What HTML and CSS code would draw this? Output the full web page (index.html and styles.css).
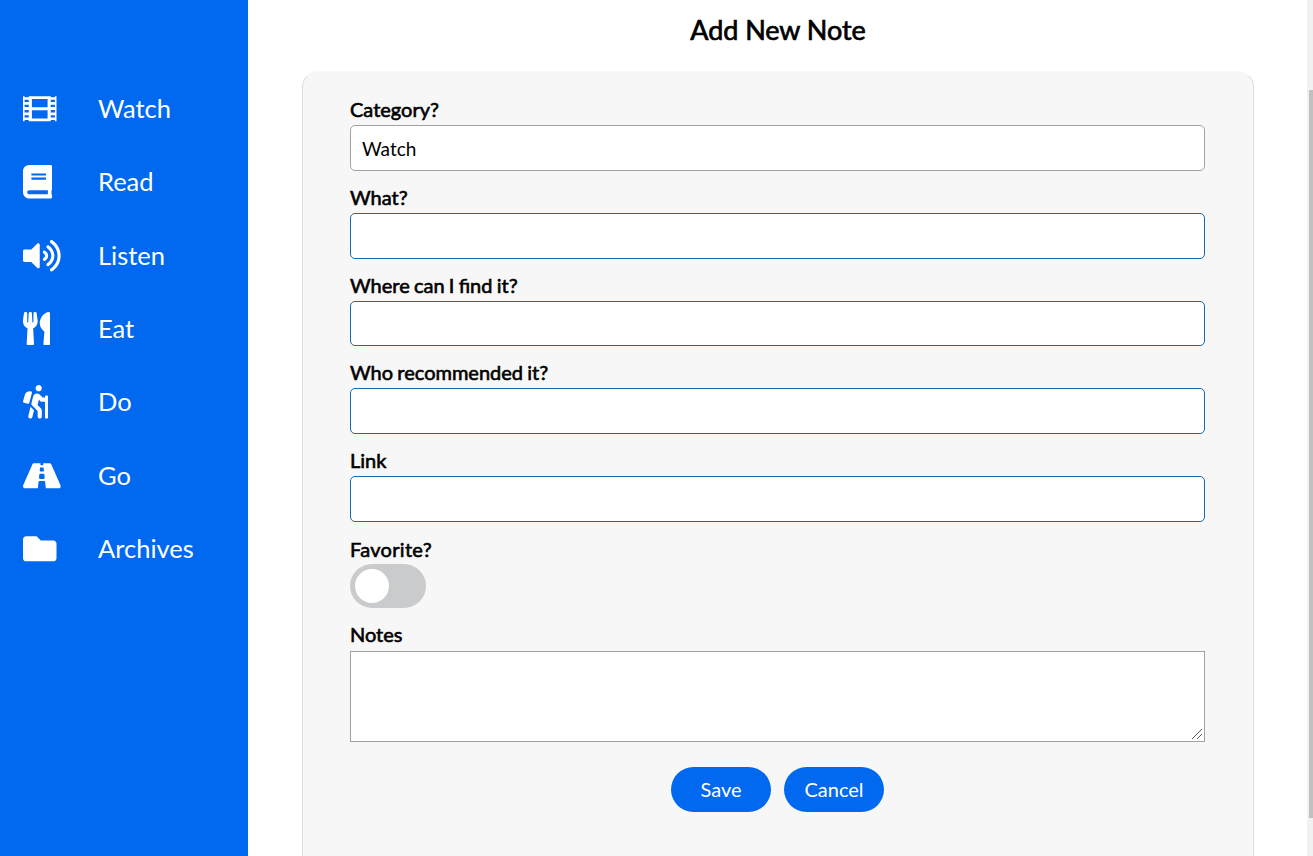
FILE: index.html
```html
<!DOCTYPE html>
<html lang="en">
<head>
<meta charset="utf-8">
<title>Add New Note</title>
<link rel="stylesheet" href="styles.css">
</head>
<body>
<nav class="sidebar">
  <a class="item"><svg class="icon" viewBox="0 0 512 512"><path fill-rule="evenodd" d="M0 64H24V80H88V64H424V80H488V64H512V448H488V428H424V448H88V428H24V448H0ZM136 108V232H376V108ZM136 280V404H376V280ZM24 118V152H88V118ZM24 194V230H88V194ZM24 274V312H88V274ZM24 354V388H88V354ZM424 118V152H488V118ZM424 194V230H488V194ZM424 274V312H488V274ZM424 354V388H488V354Z"/></svg><span>Watch</span></a>
  <a class="item"><svg class="icon" viewBox="0 0 448 512"><path d="M448 360V24c0-13.3-10.7-24-24-24H96C43 0 0 43 0 96v320c0 53 43 96 96 96h328c13.3 0 24-10.7 24-24v-16c0-7.5-3.5-14.3-8.9-18.7-4.2-15.4-4.2-59.3 0-74.7 5.4-4.3 8.9-11.1 8.9-18.6zM128 134c0-3.3 2.7-6 6-6h212c3.3 0 6 2.7 6 6v20c0 3.3-2.7 6-6 6H134c-3.3 0-6-2.7-6-6v-20zm0 64c0-3.3 2.7-6 6-6h212c3.3 0 6 2.7 6 6v20c0 3.3-2.7 6-6 6H134c-3.3 0-6-2.7-6-6v-20zm253.4 250H96c-17.7 0-32-14.3-32-32 0-17.6 14.4-32 32-32h285.4c-1.9 17.1-1.9 46.9 0 64z"/></svg><span>Read</span></a>
  <a class="item"><svg class="icon" viewBox="0 0 576 512"><path d="M215.03 71.05L126.06 160H24c-13.26 0-24 10.74-24 24v144c0 13.25 10.74 24 24 24h102.06l88.97 88.95c15.03 15.03 40.97 4.47 40.97-16.97V88.02c0-21.46-25.96-31.98-40.97-16.97zm233.32-51.08c-11.17-7.33-26.18-4.24-33.51 6.95-7.34 11.17-4.22 26.18 6.95 33.51 66.27 43.49 105.82 116.6 105.82 195.58 0 78.98-39.55 152.09-105.82 195.58-11.17 7.32-14.29 22.34-6.95 33.5 7.04 10.71 21.93 14.56 33.51 6.95C528.27 439.58 576 351.33 576 256S528.27 72.43 448.35 19.97zM480 256c0-63.53-32.06-121.94-85.77-156.24-11.19-7.14-26.03-3.82-33.12 7.46s-3.78 26.21 7.41 33.36C408.27 165.97 432 209.11 432 256s-23.73 90.03-63.48 115.42c-11.19 7.14-14.5 22.07-7.41 33.36 6.51 10.36 21.12 15.14 33.12 7.46C447.94 377.94 480 319.54 480 256zm-141.77-76.87c-11.58-6.33-26.19-2.16-32.61 9.45-6.39 11.61-2.16 26.2 9.45 32.61C327.98 228.28 336 241.63 336 256c0 14.38-8.02 27.72-20.92 34.81-11.61 6.41-15.84 21-9.45 32.61 6.43 11.66 21.05 15.8 32.61 9.45 28.23-15.55 45.77-45 45.77-76.88s-17.54-61.32-45.78-76.86z"/></svg><span>Listen</span></a>
  <a class="item"><svg class="icon" viewBox="0 0 416 512"><path d="M207.9 15.2c.8 4.7 16.1 94.5 16.1 128.8 0 52.3-27.8 89.6-68.9 104.6L168 486.7c.7 13.7-10.2 25.3-24 25.3H80c-13.7 0-24.7-11.5-24-25.3l12.9-238.1C27.7 233.6 0 196.2 0 144 0 109.6 15.3 19.9 16.1 15.2 19.3-5.1 61.4-5.4 64 16.3v141.2c1.3 3.4 15.1 3.2 16 0 1.4-25.3 7.9-139.2 8-141.8 3.3-20.8 44.7-20.8 47.9 0 .2 2.7 6.6 116.5 8 141.8.9 3.2 14.8 3.4 16 0V16.3c2.6-21.6 44.8-21.4 48-1.1zm119.2 285.7l-15 185.1c-1.2 14 9.9 26 23.9 26h56c13.3 0 24-10.7 24-24V24c0-13.2-10.7-24-24-24-82.5 0-221.4 178.5-64.9 300.9z"/></svg><span>Eat</span></a>
  <a class="item"><svg class="icon" viewBox="0 0 384 512"><path d="M80.95 472.23c-4.28 17.16 6.14 34.53 23.28 38.81 2.61.66 5.22.95 7.8.95 14.33 0 27.37-9.7 31.02-24.23l25.24-100.97-52.78-52.78-34.56 138.22zm14.89-196.12L137 117c2.19-8.42-3.14-16.95-11.92-19.06-43.88-10.52-88.35 15.07-99.32 57.17L.49 253.24c-2.19 8.42 3.14 16.95 11.92 19.06l63.56 15.25c8.79 2.1 17.68-3.02 19.87-11.44zM368 160h-16c-8.84 0-16 7.16-16 16v16h-34.75l-46.78-46.78C243.38 134.11 228.61 128 212.91 128c-27.02 0-50.47 18.3-57.03 44.52l-26.92 107.72a32.012 32.012 0 0 0 8.42 30.39L224 397.25V480c0 17.67 14.33 32 32 32s32-14.33 32-32v-82.75c0-17.09-6.66-33.16-18.75-45.25l-46.82-46.82c.15-.5.49-.89.62-1.41l19.89-79.57 22.43 22.43c6 6 14.14 9.38 22.62 9.38h48v240c0 8.84 7.16 16 16 16h16c8.84 0 16-7.16 16-16V176c.01-8.84-7.15-16-15.99-16zM240 96c26.51 0 48-21.49 48-48S266.51 0 240 0s-48 21.49-48 48 21.49 48 48 48z"/></svg><span>Do</span></a>
  <a class="item"><svg class="icon" viewBox="0 0 576 512"><path d="M573.19 402.67l-139.79-320C428.43 71.29 417.6 64 405.68 64h-97.59l2.45 23.16c.5 4.72-3.21 8.84-7.96 8.84h-29.16c-4.75 0-8.46-4.12-7.96-8.84L267.91 64h-97.59c-11.93 0-22.76 7.29-27.73 18.67L2.8 402.67C-6.45 423.86 8.31 448 30.54 448h196.84l10.31-97.68c.86-8.14 7.72-14.32 15.91-14.32h68.8c8.19 0 15.05 6.18 15.91 14.32L348.62 448h196.84c22.23 0 36.99-24.14 27.73-45.33zM260.4 135.16a8 8 0 0 1 7.96-7.16h39.29c4.09 0 7.53 3.09 7.96 7.16l4.6 43.58c.75 7.09-4.81 13.26-11.93 13.26h-40.54c-7.13 0-12.68-6.17-11.93-13.26l4.59-43.58zM315.64 304h-55.29c-9.5 0-16.91-8.23-15.91-17.68l5.07-48c.86-8.14 7.72-14.32 15.91-14.32h45.15c8.19 0 15.05 6.18 15.91 14.32l5.07 48c1 9.45-6.41 17.68-15.91 17.68z"/></svg><span>Go</span></a>
  <a class="item"><svg class="icon" viewBox="0 0 512 512"><path d="M464 128H272l-64-64H48C21.49 64 0 85.49 0 112v288c0 26.51 21.49 48 48 48h416c26.51 0 48-21.49 48-48V176c0-26.51-21.49-48-48-48z"/></svg><span>Archives</span></a>
</nav>
<main class="main">
  <h1 class="title">Add New Note</h1>
  <form class="card">
    <label class="label">Category?</label>
    <div class="field select">Watch</div>
    <label class="label">What?</label>
    <input class="field" type="text">
    <label class="label">Where can I find it?</label>
    <input class="field" type="text">
    <label class="label">Who recommended it?</label>
    <input class="field" type="text">
    <label class="label">Link</label>
    <input class="field" type="text">
    <label class="label favorite">Favorite?</label>
    <div class="toggle"><span class="knob"></span></div>
    <label class="label">Notes</label>
    <div class="notes-wrap">
      <textarea class="notes"></textarea>
      <svg class="grip" viewBox="0 0 12 12"><path d="M1 11L11 1M6 11L11 6"/></svg>
    </div>
    <div class="actions">
      <button class="btn" type="button">Save</button>
      <button class="btn" type="button">Cancel</button>
    </div>
  </form>
</main>
<div class="scrollbar"><div class="thumb"></div></div>
</body>
</html>
```

FILE: styles.css
```css
* { box-sizing: border-box; }

body {
  margin: 0;
  height: 856px;
  display: flex;
  overflow: hidden;
  background: #fff;
  color: #000;
  font-family: Lato, sans-serif;
}

.sidebar {
  width: 248px;
  flex: none;
  padding-top: 72px;
  background: #0069ef;
}

.item {
  display: flex;
  align-items: center;
  height: 73.35px;
  padding-left: 23px;
  color: #fff;
  font-size: 25.5px;
}

.item span {
  width: 150px;
  margin-left: auto;
  padding-bottom: 1.4px;
  line-height: 30px;
}

.icon {
  height: 33.5px;
  fill: #fff;
  flex: none;
}

.main {
  flex: 1;
  padding: 0 53px 0 54px;
}

.title {
  margin: 0;
  height: 71px;
  padding-top: 14px;
  text-align: center;
  font-size: 27px;
  font-weight: 400;
  line-height: 32px;
  letter-spacing: -0.05px;
  -webkit-text-stroke: 0.7px #000;
}

.card {
  display: flex;
  flex-direction: column;
  height: 785px;
  padding: 26px 48px 0 47px;
  background: #f7f7f7;
  border: 1px solid #dedede;
  border-top-color: #f7f7f7;
  border-bottom: 0;
  border-radius: 16px 16px 0 0;
}

.label {
  height: 27px;
  line-height: 22px;
  font-size: 20px;
  word-spacing: -0.9px;
  -webkit-text-stroke: 0.6px #000;
}

.field {
  width: 100%;
  height: 45.8px;
  margin: 0 0 15px;
  border: 1px solid #1a68b0;
  border-radius: 5px;
  background: #fff;
}

.select {
  padding-left: 11px;
  border-color: #a2a2a2;
  font-size: 19px;
  line-height: 46px;
}

.favorite {
  height: 26px;
  margin-top: 1px;
  letter-spacing: 0.3px;
}

.toggle {
  width: 76px;
  height: 44px;
  flex: none;
  padding: 5px;
  margin: 0 0 15px -0.5px;
  border-radius: 22px;
  background: #cacbcd;
}

.knob {
  display: block;
  width: 34px;
  height: 34px;
  border-radius: 50%;
  background: #fff;
}

.notes-wrap {
  position: relative;
  height: 91px;
  margin: 1px 0 25px;
  flex: none;
}

.notes {
  display: block;
  width: 100%;
  height: 100%;
  border: 1px solid #a2a2a2;
  background: #fff;
  resize: none;
}

.grip {
  position: absolute;
  right: 2px;
  bottom: 2px;
  width: 12px;
  height: 12px;
  fill: none;
  stroke: #555;
}

.actions {
  display: flex;
  justify-content: center;
  gap: 13px;
}

.btn {
  width: 100px;
  height: 45px;
  padding: 0;
  border: 0;
  border-radius: 23px;
  background: #0069ef;
  color: #fff;
  font: 20px Lato, sans-serif;
}

.scrollbar {
  width: 6px;
  flex: none;
  padding: 90px 0 0 2px;
  background: #f1f1f1;
}

.thumb { height: 728px; background: #c0c0c0; }
```
